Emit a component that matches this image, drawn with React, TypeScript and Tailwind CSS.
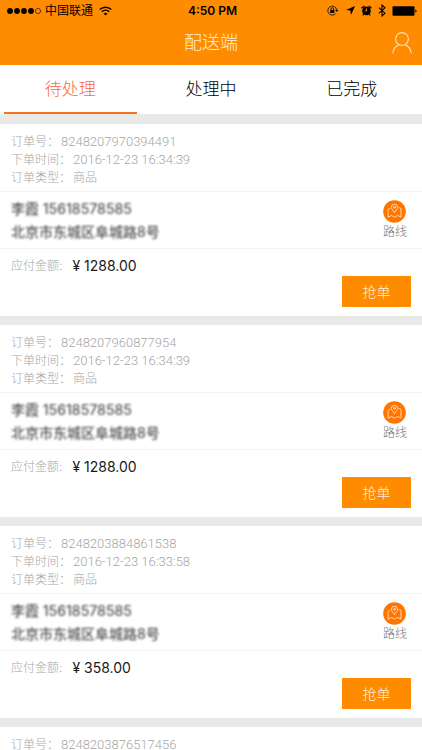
import { useState } from "react";

interface Order {
  id: string;
  time: string;
  type: string;
  customer: string;
  phone: string;
  address: string;
  amount: string;
}

const customer = {
  customer: "李霞",
  phone: "15618578585",
  address: "北京市东城区阜城路8号",
};

const orders: Order[] = [
  {
    id: "8248207970394491",
    time: "2016-12-23 16:34:39",
    type: "商品",
    amount: "1288.00",
    ...customer,
  },
  {
    id: "8248207960877954",
    time: "2016-12-23 16:34:39",
    type: "商品",
    amount: "1288.00",
    ...customer,
  },
  {
    id: "8248203884861538",
    time: "2016-12-23 16:33:58",
    type: "商品",
    amount: "358.00",
    ...customer,
  },
  {
    id: "8248203876517456",
    time: "2016-12-23 16:33:58",
    type: "商品",
    amount: "358.00",
    ...customer,
  },
];

const tabs = ["待处理", "处理中", "已完成"];

function StatusBar() {
  return (
    <div className="grid grid-cols-[1fr_auto_1fr] items-center h-[21px] pl-[7px] pr-1 text-xs leading-5 text-black">
      <div className="flex items-center">
        <svg width="36" height="8" viewBox="0 0 36 8" className="mr-0.5">
          <circle cx="3" cy="4" r="2.9" />
          <circle cx="10" cy="4" r="2.9" />
          <circle cx="17" cy="4" r="2.9" />
          <circle cx="24" cy="4" r="2.9" />
          <circle cx="31" cy="4" r="2.6" fill="none" stroke="black" strokeWidth="0.6" />
        </svg>
        <span className="font-normal">中国联通</span>
        <svg width="13" height="10" viewBox="0 0 13 10" className="ml-1.5" fill="none" stroke="black">
          <path d="M0.8 3.5a8.2 8.2 0 0 1 11.4 0" strokeWidth="1.6" />
          <path d="M2.9 5.8a5.2 5.2 0 0 1 7.2 0" strokeWidth="1.5" />
          <path d="M6.5 9.6 4.5 7.6a2.9 2.9 0 0 1 4 0z" fill="black" stroke="none" />
        </svg>
      </div>
      <span className="font-semibold">4:50 PM</span>
      <div className="flex items-center justify-end">
        {/* rotation lock */}
        <svg width="12" height="11" viewBox="0 0 12 11" fill="none" stroke="black" className="mr-[7px]">
          <path d="M9.7 4.6A4.5 4.5 0 1 0 8.6 8.7" strokeWidth="0.8" />
          <path d="M8 4.8h3.4L9.7 6.9z" fill="black" stroke="none" />
          <rect x="3.2" y="5" width="4.2" height="3" fill="black" stroke="none" />
          <path d="M4 5V4a1.3 1.3 0 0 1 2.6 0v1" strokeWidth="0.8" />
        </svg>
        <svg width="9" height="9" viewBox="0 0 9 9" className="mr-1.5">
          <path d="M9 0 5 9 4.4 4.6 0 4z" />
        </svg>
        {/* alarm */}
        <svg width="11" height="11" viewBox="0 0 11 11" className="mr-1.5">
          <circle cx="5.5" cy="5.9" r="4.3" />
          <path d="M0.6 3.3 3.3 0.9M7.7 0.9l2.7 2.4M2.8 9.2 1.8 10.4M8.2 9.2l1 1.2" stroke="black" strokeWidth="1.3" />
          <path d="M5.5 3.4V6H3.6" fill="none" stroke="#ff8c00" strokeWidth="0.9" />
        </svg>
        <svg width="8" height="13" viewBox="0 0 8 13" fill="none" stroke="black" strokeWidth="1.1" className="mr-1.5">
          <path d="M0.8 3.6 7 9.2 4 12V1l3 2.8L0.8 9.4" />
        </svg>
        <svg width="26" height="10" viewBox="0 0 26 10">
          <rect x="0.5" y="0.3" width="22" height="9.4" rx="1" />
          <path d="M23.4 3.3c1.6 0.5 1.6 2.9 0 3.4z" />
        </svg>
      </div>
    </div>
  );
}

function RouteIcon() {
  return (
    <svg width="23" height="23" viewBox="0 0 23 23">
      <circle cx="11.5" cy="11.5" r="11.3" fill="#ff7500" />
      <g fill="none" stroke="#ffe3c4" strokeWidth="0.9" strokeLinejoin="round" strokeLinecap="round">
        <path d="M11.5 12.4C9.6 10.1 8.4 8.8 8.4 7.3a3.1 3.1 0 0 1 6.2 0c0 1.5-1.2 2.8-3.1 5.1z" />
        <circle cx="11.5" cy="7.3" r="0.9" />
        <path d="M7 8.2 5.1 9.4v7.8l3.5-1.7 3 1.7 3.2-1.7 3.2 1.6V8.2l-2-0.7" />
      </g>
    </svg>
  );
}

function OrderCard({ order }: { order: Order }) {
  return (
    <li className="shrink-0 bg-white">
      <dl className="pt-[9px] pb-1 px-[11px] text-xs leading-[18px] text-[#a6a6a6] border-b border-[#f4f4f4]">
        <div className="flex gap-0.5">
          <dt>订单号：</dt>
          <dd className="font-['Roboto',sans-serif] text-[13px]">{order.id}</dd>
        </div>
        <div className="flex gap-0.5">
          <dt>下单时间：</dt>
          <dd className="font-['Roboto',sans-serif] text-[13px]">{order.time}</dd>
        </div>
        <div className="flex gap-0.5">
          <dt>订单类型：</dt>
          <dd>{order.type}</dd>
        </div>
      </dl>

      <div className="flex items-center justify-between h-[57px] px-[11px] border-b border-[#f4f4f4]">
        <div className="text-sm leading-[23px] font-medium text-[#555] blur-[1px]">
          <p>
            {order.customer} {order.phone}
          </p>
          <p>{order.address}</p>
        </div>
        <button className="flex flex-col items-center mr-1 text-xs leading-[18px] text-[#777]">
          <RouteIcon />
          <span>路线</span>
        </button>
      </div>

      <div className="pt-[7px] pb-[9px] px-[11px]">
        <p className="flex items-center gap-2.5 leading-5">
          <span className="text-xs leading-5 text-[#a6a6a6]">应付金额:</span>
          <span className="text-sm leading-5 font-normal text-[#1a1a1a]">¥ {order.amount}</span>
        </p>
        <button className="block ml-auto w-[69px] h-[31px] bg-[#ff8c00] text-sm text-[#fff0dc]">
          抢单
        </button>
      </div>
    </li>
  );
}

export default function App() {
  const [active, setActive] = useState(0);

  return (
    <div className="flex flex-col h-screen bg-[#e9e9e8] font-['Inter','Noto_Sans_CJK_SC',sans-serif] font-light">
      <header className="shrink-0 bg-[#ff8c00]">
        <StatusBar />
        <div className="grid grid-cols-[1fr_auto_1fr] items-center h-11 px-2.5">
          <h1 className="col-start-2 text-lg leading-6 text-[#fff0dc]">配送端</h1>
          <button aria-label="我的" className="justify-self-end">
            <svg width="20" height="22" viewBox="0 0 20 22" fill="none" stroke="#ffe0b5" strokeWidth="1.1" strokeLinecap="round">
              <circle cx="10" cy="7" r="6.4" />
              <path d="M0.8 21c0.6-4.3 3-7 6.2-8.5M19.2 21c-0.6-4.3-3-7-6.2-8.5" />
            </svg>
          </button>
        </div>
      </header>

      <nav className="shrink-0 grid grid-cols-3 h-[49px] bg-white">
        {tabs.map((tab, i) => (
          <button
            key={tab}
            onClick={() => setActive(i)}
            className={
              i === active
                ? "mx-1 pt-0.5 text-[17px] text-[#f7683a] border-b-2 border-[#f57420]"
                : "mx-1 pt-0.5 text-[17px] text-black border-b-2 border-transparent"
            }
          >
            {tab}
          </button>
        ))}
      </nav>

      <ul className="flex flex-col flex-1 gap-[9px] pt-2.5 overflow-y-auto [scrollbar-width:none]">
        {orders.map((order) => (
          <OrderCard key={order.id} order={order} />
        ))}
      </ul>
    </div>
  );
}
